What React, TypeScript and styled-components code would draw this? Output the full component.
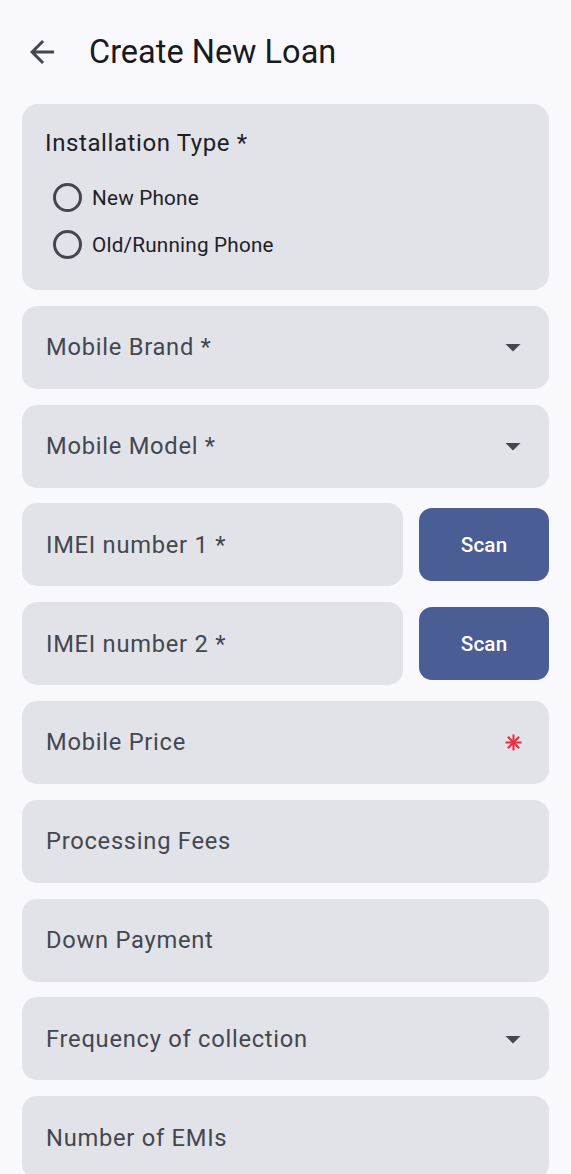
import React from "react";
import styled, { createGlobalStyle } from "styled-components";

const GlobalStyle = createGlobalStyle`
    html, body {
        margin: 0;
        padding: 0;
        background: #f9f8fd;
    }
    body {
        font-family: Roboto, "Noto Sans", Arial, sans-serif;
        -webkit-font-smoothing: antialiased;
    }
`;

const Screen = styled.div`
    width: 571px;
    height: 1174px;
    overflow: hidden;
    background: #f9f8fd;
`;

const TopBar = styled.header`
    display: flex;
    align-items: center;
    height: 104px;
    padding: 0 0 0 24px;
    box-sizing: border-box;
`;

const BackButton = styled.button`
    display: flex;
    align-items: center;
    justify-content: center;
    width: 36px;
    height: 36px;
    padding: 0;
    margin-right: 29px;
    border: none;
    background: transparent;
    color: #44474e;
`;

const Title = styled.h1`
    margin: 0;
    font-size: 32.5px;
    font-weight: 400;
    color: #1a1b20;
    letter-spacing: 0;
`;

const Form = styled.div`
    display: flex;
    flex-direction: column;
    gap: 15.8px;
    padding: 0 22px;
`;

const Card = styled.div`
    background: #e2e2e9;
    border-radius: 16px;
    padding: 25px 23px 22px;
`;

const GroupLabel = styled.div`
    font-size: 24px;
    letter-spacing: 0.6px;
    color: #1f2026;
    line-height: 28px;
    margin-bottom: 17px;
`;

const RadioRow = styled.label`
    display: flex;
    align-items: center;
    height: 47px;
    padding-left: 8px;
    gap: 10px;
    font-size: 20.7px;
    letter-spacing: 0.2px;
    color: #1f2026;
`;

const RadioCircle = styled.span`
    width: 29px;
    height: 29px;
    box-sizing: border-box;
    border: 3px solid #44474e;
    border-radius: 50%;
`;

const Field = styled.div`
    display: flex;
    align-items: center;
    justify-content: space-between;
    height: 83px;
    flex-shrink: 0;
    background: #e2e2e9;
    border-radius: 15px;
    padding: 0 18px 0 24px;
    box-sizing: border-box;
`;

const Row = styled.div`
    display: flex;
    align-items: center;
    gap: 16px;

    & > ${Field} {
        flex: 1;
    }
`;

const FieldLabel = styled.span`
    font-size: 23.7px;
    letter-spacing: 0.74px;
    color: #44474e;
`;

const Trailing = styled.span`
    display: flex;
    align-items: center;
    justify-content: center;
    width: 36px;
    height: 36px;
`;

const ScanButton = styled.button`
    width: 130px;
    height: 73px;
    border: none;
    border-radius: 13px;
    background: #4a5d94;
    color: #ffffff;
    font-family: Roboto, Arial, sans-serif;
    font-size: 20.7px;
    font-weight: 500;
    letter-spacing: 0.15px;
`;

const ArrowBack = () => (
    <svg width="36" height="36" viewBox="0 0 24 24">
        <path
            d="M20 11H7.83l5.59-5.59L12 4l-8 8 8 8 1.41-1.41L7.83 13H20v-2z"
            fill="currentColor"
        />
    </svg>
);

const DropArrow = () => (
    <svg width="36" height="36" viewBox="0 0 24 24">
        <path d="M7 10l5 5 5-5z" fill="#44474e" />
    </svg>
);

const RequiredMark = () => (
    <svg width="17" height="17" viewBox="0 0 16 16">
        <g stroke="#e5323f" strokeWidth="2" strokeLinecap="butt">
            <line x1="8" y1="0.5" x2="8" y2="15.5" />
            <line x1="0.5" y1="8" x2="15.5" y2="8" />
            <line x1="2.7" y1="2.7" x2="13.3" y2="13.3" />
            <line x1="13.3" y1="2.7" x2="2.7" y2="13.3" />
        </g>
    </svg>
);

type FieldProps = {
    label: string;
    trailing?: "dropdown" | "required";
};

const InputField = ({ label, trailing }: FieldProps) => (
    <Field>
        <FieldLabel>{label}</FieldLabel>
        {trailing && (
            <Trailing>
                {trailing === "dropdown" ? <DropArrow /> : <RequiredMark />}
            </Trailing>
        )}
    </Field>
);

export default function App() {
    return (
        <Screen>
            <GlobalStyle />
            <TopBar>
                <BackButton type="button" aria-label="Back">
                    <ArrowBack />
                </BackButton>
                <Title>Create New Loan</Title>
            </TopBar>
            <Form>
                <Card>
                    <GroupLabel>Installation Type *</GroupLabel>
                    <RadioRow>
                        <RadioCircle />
                        New Phone
                    </RadioRow>
                    <RadioRow>
                        <RadioCircle />
                        Old/Running Phone
                    </RadioRow>
                </Card>
                <InputField label="Mobile Brand *" trailing="dropdown" />
                <InputField label="Mobile Model *" trailing="dropdown" />
                <Row>
                    <InputField label="IMEI number 1 *" />
                    <ScanButton type="button">Scan</ScanButton>
                </Row>
                <Row>
                    <InputField label="IMEI number 2 *" />
                    <ScanButton type="button">Scan</ScanButton>
                </Row>
                <InputField label="Mobile Price" trailing="required" />
                <InputField label="Processing Fees" />
                <InputField label="Down Payment" />
                <InputField label="Frequency of collection" trailing="dropdown" />
                <InputField label="Number of EMIs" />
            </Form>
        </Screen>
    );
}
